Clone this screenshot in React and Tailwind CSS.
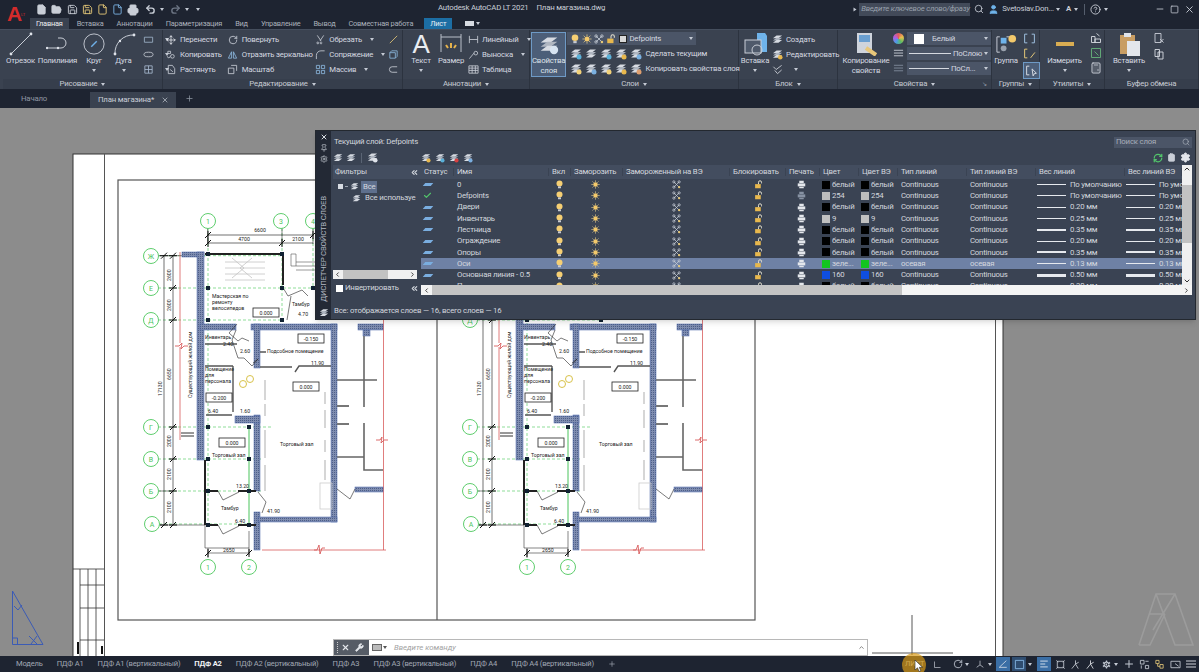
import { File, FolderOpen, Save, Printer, Undo2, Redo2, Search, User, HelpCircle, Minus, Square, X, Plus, Settings, RefreshCw, Move, RotateCw, Wrench, Check, ChevronLeft, ChevronRight, ChevronUp, ChevronDown, ChevronsLeft, Calculator, Clipboard, Pin } from 'lucide-react';

const Caret = ({ className = '' }) => <span className={`inline-block w-0 h-0 border-x-[2.5px] border-x-transparent border-t-[3px] border-t-[#c4cad4] ${className}`} />;

// --- small drawn icons ---
const Svg = ({ s = 12, children, className = '' }) => <svg width={s} height={s} viewBox="0 0 24 24" fill="none" className={`shrink-0 ${className}`}>{children}</svg>;

const Bulb = ({ s = 9 }) => <Svg s={s}><circle cx="12" cy="9" r="8" fill="#f6cf73" /><rect x="8" y="17" width="8" height="5" fill="#c9ccd2" /></Svg>;
const Sun = ({ s = 9 }) => <Svg s={s}><circle cx="12" cy="12" r="6" fill="#f3c96b" /><path d="M12 1v4M12 19v4M1 12h4M19 12h4M4 4l3 3M17 17l3 3M20 4l-3 3M7 17l-3 3" stroke="#d8c58c" strokeWidth="2" /></Svg>;
const VpFreeze = ({ s = 9 }) => <Svg s={s}><path d="M5 5l14 14M19 5L5 19" stroke="#c5ccd6" strokeWidth="2" /><circle cx="5" cy="5" r="3" stroke="#c5ccd6" strokeWidth="2" /><circle cx="19" cy="5" r="3" stroke="#c5ccd6" strokeWidth="2" /><circle cx="5" cy="19" r="3" stroke="#c5ccd6" strokeWidth="2" /><circle cx="19" cy="19" r="3" fill="#e6c878" /></Svg>;
const Lock = ({ s = 9 }) => <Svg s={s}><rect x="3" y="11" width="15" height="11" fill="#e8b84d" /><path d="M12 11V6a4 4 0 018 0v3" stroke="#e8e3d0" strokeWidth="2.5" /></Svg>;
const Print = ({ dim }) => <Svg s={9}><rect x="6" y="2" width="12" height="6" fill={dim ? '#8792a3' : '#e4e7ec'} /><rect x="2" y="9" width="20" height="8" fill={dim ? '#8792a3' : '#e4e7ec'} /><rect x="6" y="18" width="12" height="4" fill={dim ? '#8792a3' : '#e4e7ec'} /></Svg>;

const LayerStack = ({ s = 12, accent }) => (
  <Svg s={s}>
    <path d="M2 9l8-6h12l-8 6z" fill="#d7dbe2" />
    <path d="M2 14l8-6h12l-8 6z" fill="#aeb5c0" />
    <path d="M2 19l8-6h12l-8 6z" fill="#d7dbe2" />
    {accent && <circle cx="18" cy="18" r="5" fill={accent} />}
  </Svg>
);

const Line = () => <Svg s={24}><path d="M2 22L22 2" stroke="#c9ced7" strokeWidth="1" /><circle cx="2" cy="22" r="1.4" fill="#dfe3ea" /><circle cx="22" cy="2" r="1.4" fill="#dfe3ea" /></Svg>;
const Polyline = () => <Svg s={24}><path d="M1 16h14a5 5 0 000-10h-3" stroke="#c9ced7" strokeWidth="1" /><circle cx="1" cy="16" r="1.2" fill="#dfe3ea" /><circle cx="12" cy="16" r="1.2" fill="#dfe3ea" /></Svg>;
const Circle = () => <Svg s={22}><circle cx="12" cy="12" r="11" stroke="#c9ced7" strokeWidth="1" /><path d="M9 15l6-6" stroke="#6fb0e8" strokeWidth="1.5" /></Svg>;
const Arc = () => <Svg s={24}><path d="M3 22A18 18 0 0122 3" stroke="#c9ced7" strokeWidth="1" /><circle cx="3" cy="22" r="1.4" fill="#dfe3ea" /><circle cx="22" cy="3" r="1.4" fill="#dfe3ea" /><circle cx="8" cy="9" r="1.2" fill="#dfe3ea" /></Svg>;

const Tiny = ({ d, stroke = '#c9ced7', s = 11 }) => <Svg s={s}><path d={d} stroke={stroke} strokeWidth="1.8" /></Svg>;

// --- ribbon building blocks ---
const Panel = ({ title, w, arrow = true, corner, children }) => (
  <div className={`${w} shrink-0 flex flex-col border-r border-[#2c333f]`}>
    <div className="h-[50px] flex">{children}</div>
    <div className="relative h-[10px] flex items-center justify-center gap-1 text-[7.8px] leading-none text-[#c6cbd3] bg-[#363e4c]">
      {title}{arrow && <Caret />}
      {corner && <span className="absolute right-1 text-[6px] text-[#9aa2ae]">↘</span>}
    </div>
  </div>
);

const Big = ({ label, w, icon, caret, className = '' }) => (
  <div className={`${w} shrink-0 flex flex-col items-center pt-[2px] text-[7.8px] leading-[10px] text-[#d5d9e0] text-center ${className}`}>
    <div className="h-[24px] flex items-center justify-center">{icon}</div>
    <span className="whitespace-nowrap">{label}</span>
    {caret && <Caret className="mt-[3px]" />}
  </div>
);

const Row = ({ icon, label, caret }) => (
  <div className="h-[15px] flex items-center gap-[2px] text-[7.8px] leading-none text-[#d5d9e0] whitespace-nowrap">
    <span className="w-[14px] flex justify-center shrink-0">{icon}</span>
    <span>{label}</span>
    {caret && <Caret className="ml-[6px]" />}
  </div>
);

const Col = ({ className = '', children }) => <div className={`flex flex-col pt-[2px] ${className}`}>{children}</div>;

const PropSelect = ({ children, w = 'w-[84px]' }) => (
  <div className={`${w} h-[13px] flex items-center justify-between pl-[2px] pr-[3px] bg-[#4b5567] text-[7.8px] leading-none text-[#d5d9e0]`}>
    {children}<Caret />
  </div>
);

const Ribbon = () => (
  <div className="h-[60px] flex pl-[3px] bg-[#3a4250] border-t border-[#454e5d] overflow-hidden">
    <Panel title="Рисование" w="w-[160px]">
      <Big label="Отрезок" w="w-[33px]" icon={<Line />} className="ml-[1px]" />
      <Big label="Полилиния" w="w-[41px]" icon={<Polyline />} />
      <Big label="Круг" w="w-[32px]" icon={<Circle />} caret />
      <Big label="Дуга" w="w-[27px]" icon={<Arc />} caret />
      <Col className="ml-[4px]">
        <Row icon={<Tiny d="M3 7h18v11H3z" stroke="#9fb4c9" />} caret />
        <Row icon={<Tiny d="M2 12a10 5 0 1020 0 10 5 0 10-20 0" />} caret />
        <Row icon={<Tiny d="M4 4h16v16H4zM4 12h16M12 4v16" stroke="#a6b8d0" />} caret />
      </Col>
    </Panel>
    <Panel title="Редактирование" w="w-[240px]">
      <Col className="w-[62px] ml-[1px]">
        <Row icon={<Move size={10} color="#e2e5ea" />} label="Перенести" />
        <Row icon={<Tiny d="M4 5h6v5H4zM10 16a4 4 0 108 0 4 4 0 10-8 0M3 16a3 3 0 106 0" />} label="Копировать" />
        <Row icon={<Tiny d="M5 3h9l5 7v11H5zM9 12l6 5" />} label="Растянуть" />
      </Col>
      <Col className="w-[88px]">
        <Row icon={<RotateCw size={10} color="#c9ced7" />} label="Повернуть" />
        <Row icon={<Tiny d="M3 20L10 6v14zM21 20L14 6v14z" stroke="#8db8e0" />} label="Отразить зеркально" />
        <Row icon={<Tiny d="M3 9h12v12H3zM9 3h12v12" />} label="Масштаб" />
      </Col>
      <Col className="w-[73px]">
        <Row icon={<Tiny d="M5 3l8 12M19 3l-8 12M8 19a2 2 0 100 1M15 19a2 2 0 100 1" />} label="Обрезать" caret />
        <Row icon={<Tiny d="M3 22V14A10 10 0 0113 4h8" />} label="Сопряжение" caret />
        <Row icon={<Tiny d="M3 3h7v7H3zM14 3h7v7h-7zM3 14h7v7H3zM14 14h7v7h-7z" stroke="#8db8e0" />} label="Массив" caret />
      </Col>
      <Col>
        <Row icon={<Tiny d="M4 20L20 4" stroke="#e6c878" />} />
        <Row icon={<Tiny d="M4 8h12v12H4zM4 8l4-4h12v12l-4 4" stroke="#8db8e0" />} />
        <Row icon={<Tiny d="M20 6H9a6 6 0 000 12h11" stroke="#c9ced7" />} />
      </Col>
    </Panel>
    <Panel title="Аннотации" w="w-[127px]">
      <Big label="Текст" w="w-[30px]" className="ml-[3px]" icon={<span className="text-[26px] leading-none text-[#e9ecf0] font-['Liberation_Sans',sans-serif]">A</span>} caret />
      <Big label="Размер" w="w-[30px]" icon={<Svg s={24}><path d="M2 2v18M22 2v18M2 5h20" stroke="#b9bfc9" /><path d="M12 11v5M7 13l2 3M17 13l-2 3" stroke="#e6b34d" strokeWidth="2" /></Svg>} />
      <Col>
        <Row icon={<Tiny d="M3 4v16M21 4v16M3 12h18" />} label="Линейный" caret />
        <Row icon={<Tiny d="M3 21l10-12M13 9a4 4 0 108 0 4 4 0 10-8 0" />} label="Выноска" caret />
        <Row icon={<Tiny d="M2 4h20v16H2zM2 9h20M2 14h20M9 4v16M16 4v16" />} label="Таблица" />
      </Col>
    </Panel>
    <Panel title="Слои" w="w-[209px]">
      <div className="w-[36px] h-[45px] mt-[2px] ml-[1px] flex flex-col items-center border border-[#6e9ac6] bg-[#4c5e78] text-[7.8px] leading-[10px] text-[#dfe3ea] text-center">
        <div className="h-[24px] flex items-center"><LayerStack s={20} accent="#d7e4f2" /></div>
        <span>Свойства<br />слоя</span>
      </div>
      <div className="flex flex-col pt-[2px] ml-[1px]">
        <div className="w-[129px] h-[13px] flex items-center gap-[2px] pl-[3px] pr-[3px] bg-[#4b5567] text-[7.8px] leading-none text-[#d5d9e0]">
          <Bulb s={10} /><Sun s={10} /><VpFreeze s={10} /><Lock s={10} />
          <span className="w-[8px] h-[8px] ml-[1px] bg-[#d8d8d8] border border-[#222]" />
          <span>Defpoints</span>
          <Caret className="ml-auto" />
        </div>
        <div className="h-[15px] mt-[1px] flex items-center gap-[3px] pl-[3px] text-[7.8px] leading-none text-[#d5d9e0] whitespace-nowrap">
          <LayerStack accent="#5ab0d8" /><LayerStack /><LayerStack accent="#5ab0d8" /><LayerStack accent="#e8b84d" /><LayerStack accent="#7ab0e0" />
          <span>Сделать текущим</span>
        </div>
        <div className="h-[15px] flex items-center gap-[3px] pl-[3px] text-[7.8px] leading-none text-[#d5d9e0] whitespace-nowrap">
          <LayerStack accent="#f3d27a" /><LayerStack accent="#7ab0e0" /><LayerStack accent="#f3d27a" /><LayerStack accent="#e8b84d" /><LayerStack accent="#e0a070" />
          <span>Копировать свойства слоя</span>
        </div>
      </div>
    </Panel>
    <Panel title="Блок" w="w-[99px]">
      <Big label="Вставка" w="w-[30px]" className="ml-[1px]" icon={<Svg s={24}><path d="M14 1h8l3 4v15h-11z" fill="#6fb3ea" /><rect x="2" y="8" width="16" height="13" fill="#4f5a6b" stroke="#c9ced7" /><circle cx="14" cy="18" r="5" stroke="#c9ced7" /></Svg>} caret />
      <Col>
        <Row icon={<LayerStack s={11} />} label="Создать" />
        <Row icon={<LayerStack s={11} accent="#e8b84d" />} label="Редактировать" />
        <Row icon={<Tiny d="M3 6l6 6 12-9M6 14l6 7 9-8" stroke="#d7dbe2" />} caret />
      </Col>
    </Panel>
    <Panel title="Свойства" w="w-[154px]" corner>
      <Big label={<>Копирование<br />свойств</>} w="w-[54px]" className="ml-[1px]" icon={<Svg s={24}><rect x="3" y="1" width="15" height="20" fill="#cfd4dc" /><rect x="5" y="3" width="11" height="7" fill="#6a9fd0" /><path d="M12 16l10 7" stroke="#e8c77a" strokeWidth="4" /></Svg>} />
      <div className="flex flex-col pt-[2px] gap-[2px]">
        <div className="flex items-center gap-[3px]"><span className="w-[11px] h-[11px] rounded-full bg-[conic-gradient(#e35d5d,#e8c14d,#5dbb63,#4d9be8,#b05de3,#e35d5d)]" /><PropSelect><span className="flex items-center gap-[8px]"><span className="w-[10px] h-[10px] ml-[5px] bg-white" />Белый</span></PropSelect></div>
        <div className="flex items-center gap-[3px]"><Tiny s={11} d="M2 5h20M2 11h20M2 17h20" stroke="#d7dbe2" /><PropSelect><span className="flex items-center gap-[2px]"><span className="w-[42px] h-px bg-[#d5d9e0]" />ПоСлою</span></PropSelect></div>
        <div className="flex items-center gap-[3px]"><Tiny s={11} d="M2 5h20M2 11h20M2 17h20" stroke="#8792a3" /><PropSelect><span className="flex items-center gap-[2px]"><span className="w-[40px] h-px bg-[#d5d9e0]" />ПоСл...</span></PropSelect></div>
      </div>
    </Panel>
    <Panel title="Группы" w="w-[48px]">
      <Big label="Группа" w="w-[28px]" icon={<Svg s={23}><path d="M5 4H2v16h3M12 4h3" stroke="#c9ced7" /><rect x="6" y="5" width="6" height="6" fill="#6fb3ea" /><circle cx="9" cy="16" r="3" fill="#9aa2ae" /><circle cx="18" cy="6" r="4" fill="#f3c96b" /></Svg>} />
      <div className="flex flex-col pt-[2px] ml-[3px] gap-[2px]">
        <Tiny s={13} d="M3 4h5M3 20h5M3 4v16M16 4h5M21 4v16M16 20h5" stroke="#9fc0e0" />
        <Tiny s={13} d="M3 4h5M3 20h5M3 4v16M14 20l8-10" stroke="#e6c878" />
        <span className="border border-[#6e9ac6] bg-[#4c5e78] p-px"><Tiny s={13} d="M3 4h5M3 20h5M3 4v16M13 9l8 8-4 1-2 4z" stroke="#d7dbe2" /></span>
      </div>
    </Panel>
    <Panel title="Утилиты" w="w-[65px]">
      <Big label="Измерить" w="w-[43px]" className="ml-[3px]" icon={<span className="w-[18px] h-[4px] bg-[#d9ad52]" />} caret />
      <div className="flex flex-col pt-[2px] ml-[4px] gap-[3px]">
        <Tiny s={12} d="M3 9h7v12H3zM10 14h11v7H10zM13 3l6 5" stroke="#d7dbe2" />
        <Tiny s={12} d="M3 3h18v18H3zM9 9l8 8" stroke="#65b37b" />
        <Calculator size={12} color="#c9ced7" />
      </div>
    </Panel>
    <Panel title="Буфер обмена" w="w-[94px]" arrow={false}>
      <Big label="Вставить" w="w-[48px]" icon={<Svg s={24}><rect x="3" y="3" width="15" height="19" fill="#c89d63" /><rect x="7" y="1" width="7" height="4" fill="#dfe3ea" /><rect x="10" y="9" width="13" height="15" fill="#e4e7ec" /></Svg>} caret />
      <div className="flex flex-col pt-[2px] gap-[4px]">
        <Tiny s={12} d="M4 3h12v18H4zM14 14l7 7M21 14l-7 7" stroke="#c9ced7" />
        <Tiny s={12} d="M4 3h9v14H4zM10 8h10v14H10z" stroke="#d7dbe2" />
      </div>
    </Panel>
  </div>
);

const TitleBar = () => (
  <div className="h-[18px] flex items-center text-[#c9ced7] relative">
    <div className="relative w-[36px] h-[18px] pl-[7px] pt-[3px] text-[21px] leading-none font-bold text-[#d42b2b] font-['Liberation_Sans',sans-serif]">
      A<span className="absolute left-[21px] top-[13px] text-[4px] font-normal">LT</span>
    </div>
    <div className="flex items-center gap-[4px] pt-[1px]">
      <File size={11} fill="#c9ced7" /><FolderOpen size={11} fill="#c9ced7" /><Save size={11} className="ml-[1px]" /><Save size={11} color="#e6c878" /><File size={11} color="#e6c878" /><File size={11} color="#7ab0e0" /><Printer size={12} fill="#c9ced7" />
      <Undo2 size={11} strokeWidth={3} className="ml-[2px]" /><Caret /><Redo2 size={11} color="#6d7685" strokeWidth={3} className="ml-[2px]" /><Caret /><Caret className="ml-[3px]" />
    </div>
    <div className="absolute left-[438px] top-[2px] flex gap-[8px] text-[7.8px] leading-[12px] text-[#c9ced7] whitespace-nowrap">
      <span>Autodesk AutoCAD LT 2021</span><span>План магазина.dwg</span>
    </div>
    <div className="ml-auto flex items-center text-[7.8px] leading-none">
      <Caret className="-rotate-90 mr-[2px]" />
      <div className="w-[111px] h-[13px] flex items-center pl-[2px] bg-[#424a59] italic text-[#98a0ac] whitespace-nowrap">Введите ключевое слово/фразу</div>
      <Search size={10} className="ml-[4px]" />
      <User size={11} className="ml-[4px]" color="#6fb3ea" fill="#6fb3ea" />
      <span className="ml-[3px] whitespace-nowrap">Svetoslav.Don...</span><Caret className="ml-[2px]" />
      <span className="ml-[6px] font-bold">A</span><Caret className="ml-[3px]" />
      <span className="w-px h-[11px] ml-[6px] bg-[#555e6d]" />
      <HelpCircle size={11} className="ml-[5px]" /><Caret className="ml-[3px]" />
      <Minus size={10} className="ml-[47px]" /><Square size={9} className="ml-[5px]" /><X size={11} className="ml-[5px] mr-[4px]" />
    </div>
  </div>
);

const tabs = ['Вставка', 'Аннотации', 'Параметризация', 'Вид', 'Управление', 'Вывод', 'Совместная работа'];

const RibbonTabs = () => (
  <div className="h-[11px] flex items-center pl-[30px] text-[7.4px] leading-none text-[#aab0ba] whitespace-nowrap">
    <span className="h-full flex items-center px-[6px] bg-[#3a4250] text-[#eceef1]">Главная</span>
    <div className="flex gap-[13px] ml-[8px]">{tabs.map((t) => <span key={t}>{t}</span>)}</div>
    <span className="ml-[11px] h-full flex items-center px-[6px] bg-[#1c6ea4] text-[#e8eef5]">Лист</span>
    <span className="ml-[13px] w-[9px] h-[5px] bg-[#d7dbe2]" /><Caret className="ml-[2px]" />
  </div>
);

const FileTabs = () => (
  <div className="h-[19px] flex items-end pl-[21px] bg-[#1e2431] text-[7.8px] leading-none text-[#8f97a3]">
    <span className="pb-[5px] w-[69px]">Начало</span>
    <div className="h-[16px] flex items-center pl-[8px] pr-[7px] gap-[7px] bg-[#3a4250] text-[#c9ced7]">
      План магазина*<X size={8} />
    </div>
    <Plus size={9} className="ml-[9px] mb-[5px]" />
  </div>
);

// --- the drawing on the sheet ---
const Dim = ({ x, y, v }) => <path d={v ? `M${x - 3} ${y + 3}l6 -6M${x - 4} ${y}h8` : `M${x - 3} ${y + 3}l6 -6M${x} ${y - 4}v8`} stroke="#111" strokeWidth="1" />;
const Bub = ({ x, y, t }) => (
  <g>
    <circle cx={x} cy={y} r="7.5" fill="#fff" stroke="#5fce6e" strokeWidth="1" />
    <text x={x} y={y + 2.5} textAnchor="middle" fontSize="7" fill="#4bc45c">{t}</text>
  </g>
);
const T = ({ x, y, children, a, rot }) => <text x={x} y={y} fontSize="5.2" fill="#222" textAnchor={a} transform={rot ? `rotate(-90 ${x} ${y})` : undefined}>{children}</text>;
const Lvl = ({ x, y, w = 26, t }) => (
  <g>
    <rect x={x} y={y} width={w} height="9" fill="#fff" stroke="#222" strokeWidth="0.8" />
    <text x={x + w / 2} y={y + 6.5} fontSize="5.2" textAnchor="middle" fill="#222">{t}</text>
  </g>
);
const Wall = ({ x, y, w, h }) => <rect x={x} y={y} width={w} height={h} fill="url(#hatch)" stroke="#4a64a8" strokeWidth="0.5" />;

const cols = [[208, 254], [282, 254], [208, 288], [282, 288], [313, 288], [208, 320], [282, 320], [208, 427], [249, 427], [208, 459], [249, 459], [208, 491], [249, 491], [208, 525], [249, 525]];

const Plan = ({ dx = 0 }) => (
  <g transform={`translate(${dx} 0)`}>
    <g stroke="#5fce6e" strokeWidth="0.7" strokeDasharray="3 2">
      <path d="M208 228V525M282 228V320M313 228V288" />
      <path d="M158 255.7H282M158 288H313M158 320H282M158 427H272M158 459H262M158 491H262M159 524H249" />
    </g>
    <path d="M249 427V525" stroke="#4bc45c" strokeWidth="1" />
    <path d="M207.7 235H313M207.7 243H313M164 255V525M173 255V525" stroke="#333" strokeWidth="0.7" />
    <path d="M155 255.7h27M155 525h50M159 491h14M207.7 228v16M282 228v16M313 228v16M205 525v23H249M208 548v10M249 531v24M208 553H249" stroke="#333" strokeWidth="0.6" fill="none" />
    {[[208, 235], [208, 243], [282, 243], [313, 235]].map(([x, y]) => <Dim key={`${x}${y}`} x={x} y={y} />)}
    {[255.7, 288, 320, 427, 459, 491, 525].map((y) => <Dim key={y} x={173} y={y} v />)}
    <Dim x={164} y={255.7} v /><Dim x={164} y={525} v /><Dim x={208} y={553} /><Dim x={249} y={553} />
    <text x="260" y="232" fontSize="5.2" textAnchor="middle" fill="#222">6600</text>
    <text x="244" y="240.5" fontSize="5.2" textAnchor="middle" fill="#222">4700</text>
    <text x="298" y="240.5" fontSize="5.2" textAnchor="middle" fill="#222">2100</text>

    <path d="M180 252V343M180 347V440M383.5 320V550M262 550H386" stroke="#d85c5c" strokeWidth="0.8" fill="none" />
    <path d="M175 346h4l3-3 -1 6 3 -3h4M314 550h3l2-5 1 9 2-6h3M376 440h4l2-3 -1 6 3 -3h4" stroke="#d85c5c" strokeWidth="0.9" fill="none" />
    <path d="M181 433h13M181 436h13" stroke="#333" strokeWidth="1" />

    {/* walls */}
    <Wall x={182} y={252} w={22} h={5} />
    <Wall x={197} y={252} w={7} h={208} />
    <Wall x={200} y={324} w={36} h={6} />
    <Wall x={251} y={324} w={86} h={6} />
    <Wall x={254} y={324} w={6} h={44} />
    <Wall x={254} y={415} w={6} h={76} />
    <Wall x={254} y={512} w={6} h={38} />
    <Wall x={331} y={324} w={6} h={198} />
    <Wall x={258} y={517} w={79} h={5} />
    <Wall x={235} y={416} w={25} h={7} />
    <Wall x={355} y={487} w={28} h={5} />
    <Wall x={358} y={324} w={25} h={6} />
    <Wall x={363} y={330} w={7} h={6} />
    <path d="M205 254H283V285M205 460V525M206 491H218M206 525H218M238 491H256M238 525H256" stroke="#222" strokeWidth="2" fill="none" />
    <path d="M237 324l-8 9 9 8 4-3 7 3M236 330l-4 10 6 18 6 0 8 8 6-7 -5 4M218 491l5 9 16-8M218 525l5 9 16-8M258 492l8 10-4 11M337 489l13 10 5-10M282 286l6 10 14-6 6 6M287 320l4-24" stroke="#222" strokeWidth="0.6" fill="none" />
    <path d="M205 344h32M205 366h28M233 366v46M206 415H232M260 367H292M295 372l4 -6h32M260 352h6" stroke="#555" strokeWidth="1.4" fill="none" />
    <path d="M337 406h12M337 424h12" stroke="#777" strokeWidth="2.2" fill="none" />
    <path d="M364 336V407M337 380H377M364 423V470H383M337 457H364" stroke="#666" strokeWidth="1.6" fill="none" />

    {/* fixtures */}
    <path d="M225 262h40M225 268h40M225 274h40M225 280h40M232 258l12 10-12 10M252 258l-12 10 12 10" stroke="#c4c4c4" strokeWidth="0.8" fill="none" />
    <path d="M291 254v12h5v-12zM296 262h20M296 266h20M296 270h20" stroke="#555" strokeWidth="0.6" fill="none" />
    <circle cx="243" cy="384" r="3.5" fill="none" stroke="#d8c24a" strokeWidth="1" /><circle cx="250" cy="379" r="3.5" fill="none" stroke="#d8c24a" strokeWidth="1" />
    <path d="M265 380v20M265 404v12M265 430v28M265 465v26M325 392v12M325 410v18M325 440v12M325 460v20" stroke="#ccc" strokeWidth="1.6" fill="none" />
    <rect x="320" y="483" width="12" height="26" fill="none" stroke="#ccc" strokeWidth="0.8" />

    {cols.map(([x, y]) => <rect key={`${x}-${y}`} x={x - 2} y={y - 2} width="4" height="4" fill="#123" />)}

    <T x={212} y={298}>Мастерская по</T><T x={212} y={304}>ремонту</T><T x={212} y={310}>велосипедов</T>
    <Lvl x={253} y={308} t="0.000" />
    <T x={292} y={306}>Тамбур</T><T x={298} y={316}>4.70</T>
    <T x={205} y={339}>Инвентарь</T><T x={223} y={346}>2.40</T><T x={240} y={353}>2.60</T>
    <T x={267} y={353}>Подсобное помещение</T><T x={311} y={365}>11.90</T>
    <Lvl x={298} y={334} t="-0.150" /><Lvl x={293} y={382} t="0.000" />
    <T x={205} y={371}>Помещение</T><T x={205} y={377}>для</T><T x={205} y={383}>персонала</T>
    <Lvl x={206} y={393} t="-0.200" />
    <T x={208} y={413}>6.40</T><T x={240} y={413}>1.60</T>
    <Lvl x={219} y={438} t="0.000" />
    <T x={212} y={457}>Торговый зал</T><T x={280} y={446}>Торговый зал</T>
    <T x={236} y={488}>13.20</T><T x={221} y={510}>Тамбур</T><T x={235} y={523}>6.40</T><T x={267} y={513}>41.90</T>
    <T x={223} y={552}>2650</T>
    <T x={192} y={398} rot>Существующий жилой дом</T>
    <T x={171} y={281} rot>2600</T><T x={171} y={311} rot>2600</T><T x={171} y={380} rot>6650</T><T x={162} y={396} rot>17130</T>
    <T x={171} y={447} rot>2000</T><T x={171} y={480} rot>2100</T><T x={171} y={513} rot>2100</T>

    <Bub x={208} y={221} t="1" /><Bub x={281} y={221} t="3" /><Bub x={313} y={221} t="4" />
    <Bub x={151} y={256} t="Ж" /><Bub x={151} y={288} t="Е" /><Bub x={151} y={320} t="Д" />
    <Bub x={151} y={427} t="Г" /><Bub x={151} y={459} t="В" /><Bub x={151} y={491} t="Б" /><Bub x={152} y={524} t="А" />
    <Bub x={208} y={567} t="1" /><Bub x={249} y={567} t="2" />
  </g>
);

const Sheet = () => (
  <svg className="absolute inset-0 w-full h-full tracking-normal" viewBox="0 108 1199 548">
    <defs>
      <pattern id="hatch" width="2" height="2" patternUnits="userSpaceOnUse">
        <rect width="2" height="2" fill="#7f8db0" />
        <rect width="1" height="1" fill="#4e5f88" />
      </pattern>
    </defs>
    <rect x="73" y="154" width="930" height="510" fill="#fff" stroke="#333" strokeWidth="1" />
    <path d="M995.5 154V656M104.5 154V656" stroke="#555" strokeWidth="1" />
    <path d="M80 569V656M88 569V656M96 569V656M73 569H104M80 585H104M80 608H104M80 640H104" stroke="#333" strokeWidth="0.8" fill="none" />
    <path d="M78 642v12M102 646v8" stroke="#111" strokeWidth="2" />
    <rect x="118" y="180" width="637" height="440" fill="none" stroke="#555" strokeWidth="1.2" />
    <path d="M437 180V620" stroke="#555" strokeWidth="1.2" />
    <Plan />
    <Plan dx={319} />
    <path d="M912 615V655M872 653H953" stroke="#444" strokeWidth="0.9" />
    <path d="M12.5 591V644.5H43zM12.5 638h5v6.5M14 606l4 4 4-5M31 644l6-8M29 636l8 8" stroke="#3b5bb5" strokeWidth="1" fill="none" />
    <path d="M1139 645L1156 594H1175L1193 645H1175L1156 594M1175 594L1153 630M1150 614H1165M1139 645H1150L1165 614" stroke="#9c9c9c" strokeWidth="1.6" fill="none" />
  </svg>
);

// --- layer manager palette ---
const heads = ['Статус', 'Имя', 'Вкл', 'Заморозить', 'Замороженный на ВЭ', 'Блокировать', 'Печать', 'Цвет', 'Цвет ВЭ', 'Тип линий', 'Тип линий ВЭ', 'Вес линий', 'Вес линий ВЭ'];
const layers = [
  { name: '0', color: 'белый', sw: 'bg-black', lw: 'По умолчанию', h: 'h-px' },
  { name: 'Defpoints', color: '254', sw: 'bg-[#bdbdbd]', lw: 'По умолчанию', h: 'h-px', cur: true },
  { name: 'Двери', color: 'белый', sw: 'bg-black', lw: '0.20 мм', h: 'h-px' },
  { name: 'Инвентарь', color: '9', sw: 'bg-[#c0c0c0]', lw: '0.25 мм', h: 'h-px' },
  { name: 'Лестница', color: 'белый', sw: 'bg-black', lw: '0.35 мм', h: 'h-[2px]' },
  { name: 'Ограждение', color: 'белый', sw: 'bg-black', lw: '0.20 мм', h: 'h-px' },
  { name: 'Опоры', color: 'белый', sw: 'bg-black', lw: '0.35 мм', h: 'h-[2px]' },
  { name: 'Оси', color: 'зеле...', sw: 'bg-[#13c41f]', line: 'осевая', lw: '0.13 мм', h: 'h-px', sel: true },
  { name: 'Основная линия - 0.5', color: '160', sw: 'bg-[#0f4ee0]', lw: '0.50 мм', h: 'h-[3px]' },
  { name: 'П', color: 'белый', sw: 'bg-black', lw: '0.30 мм', h: 'h-[2px]' },
];
const grid = 'grid grid-cols-[33px_95px_22px_52px_107px_56px_34px_39px_39px_69px_69px_89px_57px]';

const Swatch = ({ l }) => (
  <span className="flex items-center gap-[2px] pl-[2px] overflow-hidden whitespace-nowrap"><span className={`w-[8px] h-[8px] shrink-0 ${l.sw}`} />{l.color}</span>
);
const Weight = ({ l, w }) => (
  <span className="flex items-center gap-[4px] pl-[1px] overflow-hidden whitespace-nowrap"><span className={`${w} shrink-0 ${l.h} bg-[#e6e9ee]`} />{l.lw}</span>
);

const LayerRow = ({ l }) => (
  <div className={`${grid} h-[11.3px] items-center text-[7.8px] leading-none ${l.sel ? 'bg-[#6e81a5]' : ''} text-[#d3d7de]`}>
    <span className="pl-[2px] flex">{l.cur ? <Check size={9} color="#52c46b" strokeWidth={3} /> : <span className="w-[8px] h-[3px] -skew-x-[40deg] ml-[1px] bg-[#7aaee0]" />}</span>
    <span className="pl-[3px] whitespace-nowrap">{l.name}</span>
    <span className="flex pl-[6px]"><Bulb /></span>
    <span className="flex pl-[20px]"><Sun /></span>
    <span className="flex pl-[49px]"><VpFreeze /></span>
    <span className="flex pl-[24px]"><Lock /></span>
    <span className="flex pl-[11px]"><Print dim={l.cur} /></span>
    <Swatch l={l} />
    <Swatch l={l} />
    <span className="pl-[3px]">{l.line || 'Continuous'}</span>
    <span className="pl-[3px]">{l.line || 'Continuous'}</span>
    <Weight l={l} w="w-[29px]" />
    <Weight l={l} w="w-[29px]" />
  </div>
);

const LayerPalette = () => (
  <div className="absolute left-[315px] top-[22px] w-[881px] h-[190px] flex border border-[#23282f] shadow-md text-[#d3d7de] overflow-hidden">
    <div className="w-[15px] shrink-0 flex flex-col items-center bg-[#232935] pt-[2px] gap-[3px]">
      <X size={8} strokeWidth={3} color="#d7dbe2" />
      <Pin size={8} color="#c9ced7" />
      <Settings size={8} color="#c9ced7" />
      <span className="mt-auto mb-[3px] [writing-mode:vertical-rl] rotate-180 text-[7.8px] leading-none text-[#b4bac4] whitespace-nowrap">ДИСПЕТЧЕР СВОЙСТВ СЛОЕВ</span>
      <span className="mb-[1px]"><LayerStack s={10} /></span>
    </div>
    <div className="flex-1 min-w-0 flex flex-col bg-[#3a4353] pl-[2px] pr-[3px] text-[7.8px] leading-none">
      <div className="h-[19px] flex items-center pl-[1px] pt-[3px]">
        Текущий слой: Defpoints
        <div className="ml-auto w-[78px] h-[11px] flex items-center justify-between px-[2px] bg-[#4b5567] text-[#a8afba]">Поиск слоя<Search size={8} /></div>
      </div>
      <div className="h-[15px] flex items-center">
        <div className="w-[88px] flex items-center gap-[3px]"><LayerStack s={10} /><LayerStack s={10} /><span className="w-px h-[10px] mx-[2px] bg-[#5a6474]" /><LayerStack s={11} accent="#dfe3ea" /></div>
        <div className="flex items-center gap-[4px]"><LayerStack s={10} accent="#e8b84d" /><LayerStack s={10} accent="#5ab0d8" /><LayerStack s={10} accent="#d84040" /><LayerStack s={10} accent="#7aaee0" /></div>
        <div className="ml-auto flex items-center gap-[4px] pr-[1px]"><RefreshCw size={10} color="#52c46b" strokeWidth={3} /><Clipboard size={9} color="#c9ced7" fill="#c9ced7" /><Settings size={11} color="#e4e7ec" fill="#e4e7ec" /></div>
      </div>
      <div className="h-[130px] flex">
        <div className="w-[88px] shrink-0 flex flex-col">
          <div className="h-[14px] flex items-center justify-between px-[2px] bg-[#434d5f]">Фильтры<ChevronsLeft size={9} strokeWidth={3} /></div>
          <div className="flex-1 pt-[2px] pl-[5px] overflow-hidden">
            <div className="flex items-center gap-[2px]"><span className="w-[5px] h-[5px] bg-[#d7dbe2]" /><span className="w-[3px] h-px bg-[#9aa2ae]" /><LayerStack s={9} /><span className="px-[2px] py-[2px] bg-[#5e6f8d]">Все</span></div>
            <div className="flex items-center gap-[2px] pl-[14px] mt-[1px] whitespace-nowrap"><LayerStack s={9} /><span className="ml-[2px]">Все используе</span></div>
          </div>
          <div className="h-[9px] flex items-center justify-between px-[1px] mr-[4px] mb-[2px] bg-[#f0f0f0]"><ChevronLeft size={7} color="#333" strokeWidth={3} /><span className="w-[45px] h-full ml-[2px] bg-[#c2c2c2]" /><span className="flex-1" /><ChevronRight size={7} color="#333" strokeWidth={3} /></div>
          <div className="h-[14px] flex items-center gap-[2px] pl-[3px] pr-[2px]"><span className="w-[7px] h-[7px] bg-white" />Инвертировать<ChevronsLeft size={9} strokeWidth={3} className="ml-auto" /></div>
        </div>
        <div className="flex-1 min-w-0 flex flex-col">
          <div className="flex-1 flex min-h-0">
            <div className="flex-1 min-w-0 overflow-hidden">
              <div className={`${grid} h-[14px] items-center bg-[#434d5f] whitespace-nowrap`}>
                {heads.map((h) => <span key={h} className="pl-[3px] overflow-hidden border-r border-[#3a4353]">{h}</span>)}
              </div>
              {layers.map((l) => <LayerRow key={l.name} l={l} />)}
            </div>
            <div className="w-[10px] shrink-0 flex flex-col items-center justify-between bg-[#f0f0f0]">
              <ChevronUp size={8} color="#333" strokeWidth={3} />
              <span className="w-full h-[58px] -mt-[22px] bg-[#c2c2c2]" />
              <ChevronDown size={8} color="#333" strokeWidth={3} />
            </div>
          </div>
          <div className="h-[10px] flex items-center justify-between px-[2px] bg-[#f4f4f4]"><ChevronLeft size={7} color="#333" strokeWidth={3} /><span className="w-[470px] h-full mr-auto ml-[2px] bg-[#c4c4c4]" /><ChevronRight size={7} color="#333" strokeWidth={3} /></div>
        </div>
      </div>
      <div className="mt-[12px] pl-[1px]">Все: отображается слоев — 16, всего слоев — 16</div>
    </div>
  </div>
);

const CommandLine = () => (
  <div className="absolute left-[333px] bottom-0 w-[535px] h-[17px] flex items-center bg-white border border-[#b8b8b8]">
    <div className="w-[35px] h-full flex items-center gap-[2px] pl-[3px] bg-[#565c66]">
      <span className="w-[2px] h-[11px] border-l border-dotted border-[#ccc]" /><X size={9} color="#e4e7ec" strokeWidth={3} /><Wrench size={9} color="#e4e7ec" fill="#e4e7ec" className="ml-[3px]" />
    </div>
    <span className="w-[10px] h-[7px] ml-[3px] border border-[#666] bg-[#bbb]" />
    <Caret className="ml-[1px] !border-t-[#555]" />
    <span className="ml-[7px] text-[7.8px] italic text-[#a3a3a3] tracking-normal">Введите команду</span>
    <ChevronUp size={7} color="#777" strokeWidth={3} className="ml-auto mr-[2px]" />
  </div>
);

const sheets = ['ПДФ А1', 'ПДФ А1 (вертикальный)', 'ПДФ А2', 'ПДФ А2 (вертикальный)', 'ПДФ А3', 'ПДФ А3 (вертикальный)', 'ПДФ А4', 'ПДФ А4 (вертикальный)'];

const StatusBar = () => (
  <div className="relative h-[16px] flex items-center pl-[16px] bg-[#1e2431] text-[7.6px] leading-none text-[#a0a7b3] whitespace-nowrap">
    <span>Модель</span>
    <div className="flex gap-[14px] ml-[14px]">
      {sheets.map((s) => <span key={s} className={s === 'ПДФ А2' ? 'font-bold text-[#f0f2f5]' : ''}>{s}</span>)}
    </div>
    <Plus size={8} className="ml-[14px]" />
    <div className="ml-auto flex items-center text-[#c2c8d2]">
      <span className="w-[18px]">ЛИСТ</span>
      <span className="w-[9px] ml-[10px]"><Tiny s={9} d="M4 4v16h16" /></span>
      <RotateCw size={10} className="ml-[11px]" /><Caret className="ml-[2px]" />
      <span className="ml-[6px]"><Tiny s={10} d="M12 4v10M4 20l8-6 8 6" /></span><Caret className="ml-[3px]" />
      <span className="ml-[4px] w-[14px] h-[14px] flex items-center justify-center bg-[#3a6ea5]"><Tiny s={10} d="M3 20L20 4M3 20h18" stroke="#e4e7ec" /></span>
      <span className="ml-[2px] w-[14px] h-[14px] flex items-center justify-center bg-[#2f4d70]"><Tiny s={11} d="M3 3h18v18H3z" stroke="#8dc0ee" /></span><Caret className="ml-[2px]" />
      <span className="ml-[5px] w-[14px] h-[14px] flex items-center justify-center bg-[#3a6ea5]"><Tiny s={10} d="M3 5h18M3 12h12M3 19h18" stroke="#fff" /></span>
      <span className="ml-[4px]"><Tiny s={11} d="M5 5h14v14H5zM3 3l4 4M21 3l-4 4M3 21l4-4M21 21l-4-4" /></span>
      <span className="ml-[4px]"><Tiny s={11} d="M12 3v8l7-4M12 11l-8 10M12 11l6 10" /></span>
      <span className="ml-[4px]"><Tiny s={11} d="M12 3v8l7-4M12 11l-8 10M12 11l6 10" stroke="#e4e7ec" /></span>
      <Settings size={11} className="ml-[5px]" fill="#c2c8d2" color="#1e2431" /><Caret className="ml-[2px]" />
      <Plus size={12} className="ml-[5px]" />
      <span className="ml-[4px]"><Tiny s={11} d="M3 3h8v8H3zM14 14h7v7h-7zM5 14v7M14 5h7" /></span>
      <span className="ml-[4px]"><Tiny s={11} d="M4 3h7v7H4zM13 12h7v8h-7zM8 10v6h5" stroke="#e6c878" /></span>
      <span className="ml-[5px]"><Tiny s={11} d="M2 5h20v14H2zM11 10l8 6" /></span>
      <span className="ml-[4px] mr-[2px]"><Tiny s={12} d="M2 6h20M2 12h20M2 18h20" stroke="#e4e7ec" /></span>
    </div>
    {/* cursor highlight */}
    <span className="absolute left-[902px] -top-[3px] w-[24px] h-[24px] rounded-full bg-[#d99a16]/70" />
    <svg className="absolute left-[914px] top-[4px]" width="9" height="12" viewBox="0 0 9 12"><path d="M1 0v10l2.5-2.2L5 11.5l1.8-.8-1.5-3.4H8.5z" fill="#fff" stroke="#222" strokeWidth="0.6" /></svg>
  </div>
);

const App = () => (
  <div className="w-[1199px] h-[672px] flex flex-col overflow-hidden bg-[#1e2431] font-['Roboto',sans-serif] tracking-[-0.2px]">
    <TitleBar />
    <RibbonTabs />
    <Ribbon />
    <FileTabs />
    <div className="relative flex-1 bg-[#8c8c8c]">
      <Sheet />
      <LayerPalette />
      <CommandLine />
    </div>
    <StatusBar />
  </div>
);

export default App;
